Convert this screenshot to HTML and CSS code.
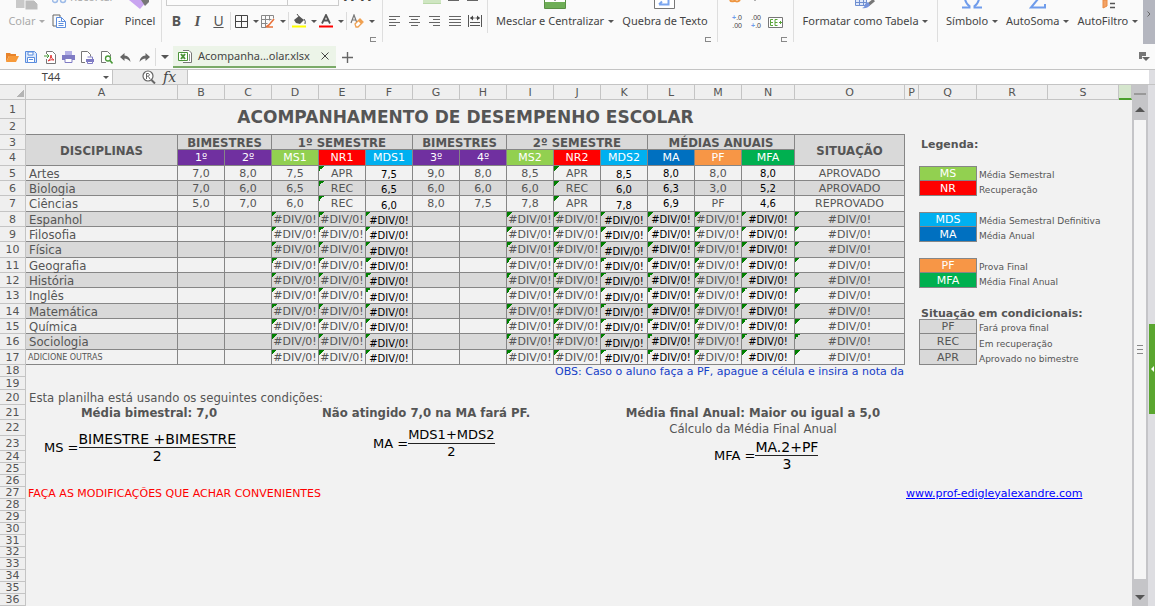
FILE: index.html
```html
<!DOCTYPE html>
<html lang="pt-BR">
<head>
<meta charset="utf-8">
<title>Acompanhamento escolar.xlsx</title>
<link rel="stylesheet" href="styles.css">
</head>
<body>
<div class="app">
  <div class="ribbon">
    <div class="group clipboard">
      <button class="big w-paste disabled"><svg width="24" height="10" viewBox="0 0 24 10"><path d="M1 0h12v8H1z" fill="#c9c9c9"/><path d="M10 0h9l4 4v6H10z" fill="#bdbdbd" stroke="#fafafa"/></svg><span>Colar <i class="caret"></i></span></button>
      <div class="stack">
        <button class="line cut disabled"><svg width="15" height="5" viewBox="0 0 15 5"><circle cx="3" cy="1" r="2.5" fill="none" stroke="#9dbbe8" stroke-width="1.5"/><circle cx="11" cy="1" r="2.5" fill="none" stroke="#9dbbe8" stroke-width="1.5"/></svg><span>Recortar</span></button>
        <button class="line"><svg width="15" height="14" viewBox="0 0 15 14"><path d="M4 12H1V1h7v2" fill="none" stroke="#666"/><path d="M4.500 3.500h5l4 4v6h-9z" fill="#fff" stroke="#5b8dde"/><path d="M9.500 3.500v4h4M6.500 7.500h2M6.500 9.500h5M6.500 11.500h5" fill="none" stroke="#5b8dde"/></svg><span>Copiar</span></button>
      </div>
      <button class="big w-brush"><svg width="22" height="10" viewBox="0 0 22 10"><path d="M0 0l11 9 7-8-1-1z" fill="#c9a5f0"/><path d="M12 0h8v2l-4 4z" fill="#777"/></svg><span>Pincel</span></button>
    </div>
    <div class="group font">
      <div class="top"><select class="face" aria-label="Fonte"><option>Arial</option></select><select class="size" aria-label="Tamanho"><option>10</option></select><b class="grow">A&nbsp;&nbsp;A</b></div>
      <div class="tools">
        <button class="t"><b>B</b></button><button class="t"><em>I</em></button><button class="t"><u>U</u></button>
        <i class="bar"></i>
        <button class="t drop"><svg width="13" height="13" viewBox="0 0 13 13"><path d="M.5.5h12v12H.5zM6.500.5v12M.5 6.500h12" fill="none" stroke="#444"/></svg><i class="caret"></i></button>
        <button class="t drop"><svg width="14" height="13" viewBox="0 0 14 13"><path d="M.5.5h12v3M.5.5v12h5M4.500.5v12M8.500.5v5M.5 4.500h10M.5 8.500h6" fill="none" stroke="#888"/><path d="M13 4L8 10l-3 2M6 12h6" fill="none" stroke="#e8713a" stroke-width="1.600"/></svg><i class="caret"></i></button>
        <i class="bar"></i>
        <button class="t drop"><svg width="14" height="14" viewBox="0 0 14 14"><path d="M2 6l5-4 5 4-4 4-4-1z" fill="#555"/><path d="M5 0l3 4M12 5q2 2 1 5" stroke="#555" fill="none"/><path d="M0 11.500h14v2H0z" fill="#ff0"/></svg><i class="caret"></i></button>
        <button class="t drop"><svg width="14" height="14" viewBox="0 0 14 14"><path d="M3 9.500L7 1l4 8.500M4.500 6.500h5" fill="none" stroke="#555" stroke-width="1.800"/><path d="M0 11.500h14v2H0z" fill="#f00"/></svg><i class="caret"></i></button>
        <i class="bar"></i>
        <button class="t drop"><svg width="14" height="14" viewBox="0 0 14 14"><path d="M1 9l3-8 3 8M2 6h4" fill="none" stroke="#777" stroke-width="1.200"/><path d="M5 10l5-5 3 3-5 5H6z" fill="#fff" stroke="#f0a050" stroke-width="1.300"/><path d="M8 7l3 3 2-2-3-3z" fill="#f0a050"/></svg><i class="caret"></i></button>
      </div>
      <button class="launch" aria-label="Mais opções de fonte"></button>
    </div>
    <div class="group align">
      <div class="aligns">
        <div class="top"><i class="gap"></i><i class="on"></i><svg width="34" height="2" viewBox="0 0 34 2"><path d="M2 .5h11M21 .5h11" stroke="#666"/></svg></div>
        <div class="tools">
          <button class="a" aria-label="Esquerda"><svg width="12" height="12" viewBox="0 0 12 12"><path d="M0 1.500h11M0 4.500h7M0 7.500h11M0 10.500h7" stroke="#666"/></svg></button>
          <button class="a" aria-label="Centro"><svg width="12" height="12" viewBox="0 0 12 12"><path d="M0 1.500h11M2 4.500h7M0 7.500h11M2 10.500h7" stroke="#666"/></svg></button>
          <button class="a" aria-label="Direita"><svg width="12" height="12" viewBox="0 0 12 12"><path d="M0 1.500h11M4 4.500h7M0 7.500h11M4 10.500h7" stroke="#666"/></svg></button>
          <button class="a" aria-label="Justificar"><svg width="12" height="12" viewBox="0 0 12 12"><path d="M0 1.500h12M0 4.500h12M0 7.500h12M0 10.500h12" stroke="#666"/></svg></button>
          <button class="a" aria-label="Distribuir"><svg width="14" height="12" viewBox="0 0 14 12"><path d="M.5 0v12M13.500 0v12M2 7.500h10M2 10.500h10M2.500 3h9" stroke="#555"/><path d="M5 .5L2 3l3 2.500zM9 .5L12 3 9 5.500z" fill="#444"/><path d="M7 0v6" stroke="#fafafa"/></svg></button>
        </div>
      </div>
      <button class="big w-merge"><svg width="22" height="10" viewBox="0 0 22 10"><path d="M.5-2h21V8.500H.5z" fill="#fff" stroke="#5a8f45"/><path d="M1 2h20v6H1z" fill="#6fae57"/><path d="M11 0v1" stroke="#444"/></svg><span>Mesclar e Centralizar <i class="caret"></i></span></button>
      <button class="big w-wrap"><svg width="22" height="10" viewBox="0 0 22 10"><path d="M.5-2h20V8.500H.5z" fill="#fff" stroke="#777"/><path d="M14.500 0v4.500H5M8 1.500L5 4.500" fill="none" stroke="#7aa5ef" stroke-width="2"/></svg><span>Quebra de Texto</span></button>
      <button class="launch" aria-label="Mais opções de alinhamento"></button>
    </div>
    <div class="group number">
      <div class="top"><svg width="30" height="4" viewBox="0 0 30 4"><path d="M2 0q1 2 4 1M6 0q3 3 6 0" fill="none" stroke="#ee9540" stroke-width="2"/><path d="M27 0v1" stroke="#666"/></svg></div>
      <div class="tools">
        <button class="n"><span><b>+</b>.0</span><span>.00</span></button>
        <button class="n"><span>.00</span><span><b>+</b>.0</span></button>
        <button class="n"><svg width="15" height="11" viewBox="0 0 15 11"><path d="M.5.5h14v10H.5z" fill="#fff" stroke="#777"/><path d="M5 2.500H2.500v6H5M2.500 5.500H5M9.500 2.500H7v6h2.500M7 5.500h2.500M11 5.500h3M12.500 4v3" fill="none" stroke="#5aa53a"/></svg></button>
      </div>
      <button class="launch" aria-label="Mais opções de número"></button>
    </div>
    <div class="group styles">
      <button class="big"><svg width="20" height="10" viewBox="0 0 20 10"><path d="M.5-1h11v6.500H.5zM.5 2.500h11M4.500 0v5M8.500 0v5" fill="#dfe8fa" stroke="#6f8fd0"/><path d="M19 0l-6 5" stroke="#777" stroke-width="3"/><path d="M13 2l2 3q-3 4-8 3 3-1 3-4z" fill="#7593dd"/></svg><span>Formatar como Tabela <i class="caret"></i></span></button>
    </div>
    <div class="group edit">
      <button class="big"><svg width="20" height="10" viewBox="0 0 20 10"><path d="M0 7.500h7.500V6Q4 4 3-1M20 7.500h-7.500V6Q16 4 17-1" fill="none" stroke="#6f9ceb" stroke-width="2"/></svg><span>Símbolo <i class="caret"></i></span></button>
      <button class="big"><svg width="18" height="10" viewBox="0 0 18 10"><path d="M9-1L2 7.500h14V4" fill="none" stroke="#6f9ceb" stroke-width="2"/></svg><span>AutoSoma <i class="caret"></i></span></button>
      <button class="big"><svg width="16" height="10" viewBox="0 0 16 10"><path d="M3 0v8l4-2V0z" fill="#f2a265" stroke="#ea8a42"/><path d="M10 3.500h5M10 7.500h5" stroke="#555" stroke-width="1.500"/></svg><span>AutoFiltro <i class="caret"></i></span></button>
    </div>
    <button class="scroll-ribbon" aria-label="Rolar"><svg width="4" height="6" viewBox="0 0 4 6"><path d="M.5.5L3 3 .5 5.500" fill="none" stroke="#666"/></svg></button>
  </div>

  <div class="tabs">
    <button class="q" aria-label="Abrir"><svg width="14" height="12" viewBox="0 0 14 12"><path d="M1 11V2h4l1 1h5v2H4z" fill="#e8832a"/><path d="M1 11l3-6h10l-3 6z" fill="#f79a3a"/></svg></button>
    <button class="q" aria-label="Salvar"><svg width="12" height="12" viewBox="0 0 12 12"><path d="M.5.5h9l2 2v9H.5z" fill="#d9e7fb" stroke="#5b8dde"/><path d="M3 1h5v3H3zM2.500 6.500h7v5h-7zM4 8.500h4" fill="#fff" stroke="#5b8dde"/></svg></button>
    <button class="q" aria-label="Exportar PDF"><svg width="12" height="13" viewBox="0 0 12 13"><path d="M2.500 3V.5h6l3 3v9h-9V8" fill="#fff" stroke="#777"/><path d="M4 10q3-2 3-6 0 4 3 5-3-1-6 1" fill="none" stroke="#e03a3a"/><path d="M0 5h4M3 3l2 2-2 2" fill="none" stroke="#4a9a3a"/></svg></button>
    <button class="q" aria-label="Imprimir"><svg width="13" height="12" viewBox="0 0 13 12"><path d="M3 0h7v4H3z" fill="#b4b1e6"/><path d="M0 4h13v5H0z" fill="#7f7bc4"/><path d="M3 7.500h7v4H3z" fill="#fff" stroke="#7f7bc4"/></svg></button>
    <button class="q" aria-label="Impressão rápida"><svg width="13" height="13" viewBox="0 0 13 13"><path d="M4 11.500H.5V.5h6l3 3v2" fill="#fff" stroke="#777"/><path d="M5 8h8v3H5z" fill="#7f7bc4"/><path d="M6.500 6h5v2M6.500 10.500h5v2h-5z" fill="#fff" stroke="#7f7bc4"/></svg></button>
    <button class="q" aria-label="Visualizar impressão"><svg width="12" height="13" viewBox="0 0 12 13"><path d="M5 11.500H.5V.5h6l3 3v2" fill="#fff" stroke="#777"/><circle cx="7" cy="7.500" r="2.500" fill="#fff" stroke="#4a9a3a" stroke-width="1.300"/><path d="M9 9.500l2.500 3" stroke="#4a9a3a" stroke-width="1.600"/></svg></button>
    <button class="q" aria-label="Desfazer"><svg width="11" height="9" viewBox="0 0 11 9"><path d="M0 4l4.500-4v2.500Q10 3 10.500 9 8 5.500 4.500 5.500V8z" fill="#666"/></svg></button>
    <button class="q" aria-label="Refazer"><svg width="11" height="9" viewBox="0 0 11 9"><path d="M11 4L6.500 0v2.500Q1 3 .5 9 3 5.500 6.500 5.500V8z" fill="#666"/></svg></button>
    <i class="bar"></i>
    <button class="more" aria-label="Personalizar"><i class="caret wide"></i></button>
    <div class="doc">
      <svg width="14" height="13" viewBox="0 0 14 13"><path d="M5 .5h6l2.500 2.500v9.500H5" fill="#fff" stroke="#777"/><path d="M.5 2.500h9v8h-9z" fill="#fff" stroke="#4b9339"/><path d="M3 4l4 5M7 4L3 9" stroke="#4b9339" stroke-width="2"/><path d="M11.500 4v7" stroke="#999"/></svg>
      <a href="#sheet">Acompanha...olar.xlsx</a>
      <button aria-label="Fechar"><svg width="8" height="8" viewBox="0 0 8 8"><path d="M.5.5l7 7M7.500.5l-7 7" stroke="#444"/></svg></button>
    </div>
    <button class="new" aria-label="Nova aba"><svg width="11" height="11" viewBox="0 0 11 11"><path d="M5.500 0v11M0 5.500h11" stroke="#666" stroke-width="1.400"/></svg></button>
    <button class="list" aria-label="Lista de abas"><svg width="11" height="10" viewBox="0 0 11 10"><path d="M0 0h7v4H3v3H0z" fill="#777"/><path d="M3 5h8L7 9z" fill="#666"/></svg></button>
  </div>

  <div class="formula">
    <div class="name"><input value="T44" aria-label="Caixa de nome"><i class="caret"></i></div>
    <div class="fx">
      <svg width="14" height="14" viewBox="0 0 14 14"><circle cx="6" cy="6" r="5" fill="#fff" stroke="#666" stroke-width="1.200"/><path d="M4.500 9V3.500h2q2 1.200 0 2.700h-2M6.500 6.500L8 9" fill="none" stroke="#666"/><path d="M9.500 10l3.500 3.500" stroke="#666" stroke-width="2"/></svg>
      <em>fx</em>
    </div>
    <input class="entry" aria-label="Barra de fórmulas">
    <i class="edge"></i>
  </div>

  <div class="work">
    <div class="view">
    <table class="sheet" id="sheet">
      <colgroup><col class="c-num"><col class="c-a"><col class="c-v" span="12"><col class="c-n"><col class="c-o"><col class="c-p"><col class="c-q"><col class="c-r" span="2"><col></colgroup>
      <thead><tr><th class="corner"></th><th>A</th><th>B</th><th>C</th><th>D</th><th>E</th><th>F</th><th>G</th><th>H</th><th>I</th><th>J</th><th>K</th><th>L</th><th>M</th><th>N</th><th>O</th><th>P</th><th>Q</th><th>R</th><th>S</th><th class="sel"></th></tr></thead>
      <tbody>
      <tr class="h1"><th>1</th><td class="title" colspan="15" rowspan="2">ACOMPANHAMENTO DE DESEMPENHO ESCOLAR</td></tr>
      <tr><th>2</th></tr>
      <tr class="m"><th>3</th><td class="hd" rowspan="2">DISCIPLINAS</td><td class="hd" colspan="2">BIMESTRES</td><td class="hd" colspan="3">1º SEMESTRE</td><td class="hd" colspan="2">BIMESTRES</td><td class="hd" colspan="3">2º SEMESTRE</td><td class="hd" colspan="3">MÉDIAS ANUAIS</td><td class="hd" rowspan="2">SITUAÇÃO</td><td></td><td class="leg" colspan="3">Legenda:</td></tr>
      <tr class="m tall"><th>4</th><td class="k purple">1º</td><td class="k purple">2º</td><td class="k lime">MS1</td><td class="k red">NR1</td><td class="k cyan">MDS1</td><td class="k purple">3º</td><td class="k purple">4º</td><td class="k lime">MS2</td><td class="k red">NR2</td><td class="k cyan">MDS2</td><td class="k blue">MA</td><td class="k orange">PF</td><td class="k green">MFA</td></tr>
      <tr class="m d"><th>5</th><td>Artes</td><td>7,0</td><td>8,0</td><td>7,5</td><td>APR</td><td>7,5</td><td>9,0</td><td>8,0</td><td>8,5</td><td>APR</td><td>8,5</td><td>8,0</td><td>8,0</td><td>8,0</td><td>APROVADO</td><td></td><td class="k lime first">MS</td><td class="desc" colspan="3">Média Semestral</td></tr>
      <tr class="m d alt"><th>6</th><td>Biologia</td><td>7,0</td><td>6,0</td><td>6,5</td><td>REC</td><td>6,5</td><td>6,0</td><td>6,0</td><td>6,0</td><td>REC</td><td>6,0</td><td>6,3</td><td>3,0</td><td>5,2</td><td>APROVADO</td><td></td><td class="k red">NR</td><td class="desc" colspan="3">Recuperação</td></tr>
      <tr class="m d tall"><th>7</th><td>Ciências</td><td>5,0</td><td>7,0</td><td>6,0</td><td>REC</td><td>6,0</td><td>8,0</td><td>7,5</td><td>7,8</td><td>APR</td><td>7,8</td><td>6,9</td><td>PF</td><td>4,6</td><td>REPROVADO</td></tr>
      <tr class="m d err alt"><th>8</th><td>Espanhol</td><td></td><td></td><td>#DIV/0!</td><td>#DIV/0!</td><td>#DIV/0!</td><td></td><td></td><td>#DIV/0!</td><td>#DIV/0!</td><td>#DIV/0!</td><td>#DIV/0!</td><td>#DIV/0!</td><td>#DIV/0!</td><td>#DIV/0!</td><td></td><td class="k cyan first">MDS</td><td class="desc" colspan="3">Média Semestral Definitiva</td></tr>
      <tr class="m d err"><th>9</th><td>Filosofia</td><td></td><td></td><td>#DIV/0!</td><td>#DIV/0!</td><td>#DIV/0!</td><td></td><td></td><td>#DIV/0!</td><td>#DIV/0!</td><td>#DIV/0!</td><td>#DIV/0!</td><td>#DIV/0!</td><td>#DIV/0!</td><td>#DIV/0!</td><td></td><td class="k blue">MA</td><td class="desc" colspan="3">Média Anual</td></tr>
      <tr class="m d err alt tall"><th>10</th><td>Física</td><td></td><td></td><td>#DIV/0!</td><td>#DIV/0!</td><td>#DIV/0!</td><td></td><td></td><td>#DIV/0!</td><td>#DIV/0!</td><td>#DIV/0!</td><td>#DIV/0!</td><td>#DIV/0!</td><td>#DIV/0!</td><td>#DIV/0!</td></tr>
      <tr class="m d err"><th>11</th><td>Geografia</td><td></td><td></td><td>#DIV/0!</td><td>#DIV/0!</td><td>#DIV/0!</td><td></td><td></td><td>#DIV/0!</td><td>#DIV/0!</td><td>#DIV/0!</td><td>#DIV/0!</td><td>#DIV/0!</td><td>#DIV/0!</td><td>#DIV/0!</td><td></td><td class="k orange first">PF</td><td class="desc" colspan="3">Prova Final</td></tr>
      <tr class="m d err alt"><th>12</th><td>História</td><td></td><td></td><td>#DIV/0!</td><td>#DIV/0!</td><td>#DIV/0!</td><td></td><td></td><td>#DIV/0!</td><td>#DIV/0!</td><td>#DIV/0!</td><td>#DIV/0!</td><td>#DIV/0!</td><td>#DIV/0!</td><td>#DIV/0!</td><td></td><td class="k green">MFA</td><td class="desc" colspan="3">Média Final Anual</td></tr>
      <tr class="m d err tall"><th>13</th><td>Inglês</td><td></td><td></td><td>#DIV/0!</td><td>#DIV/0!</td><td>#DIV/0!</td><td></td><td></td><td>#DIV/0!</td><td>#DIV/0!</td><td>#DIV/0!</td><td>#DIV/0!</td><td>#DIV/0!</td><td>#DIV/0!</td><td>#DIV/0!</td></tr>
      <tr class="m d err alt"><th>14</th><td>Matemática</td><td></td><td></td><td>#DIV/0!</td><td>#DIV/0!</td><td>#DIV/0!</td><td></td><td></td><td>#DIV/0!</td><td>#DIV/0!</td><td>#DIV/0!</td><td>#DIV/0!</td><td>#DIV/0!</td><td>#DIV/0!</td><td>#DIV/0!</td><td></td><td class="leg" colspan="4">Situação em condicionais:</td></tr>
      <tr class="m d err"><th>15</th><td>Química</td><td></td><td></td><td>#DIV/0!</td><td>#DIV/0!</td><td>#DIV/0!</td><td></td><td></td><td>#DIV/0!</td><td>#DIV/0!</td><td>#DIV/0!</td><td>#DIV/0!</td><td>#DIV/0!</td><td>#DIV/0!</td><td>#DIV/0!</td><td></td><td class="k gray first">PF</td><td class="desc" colspan="3">Fará prova final</td></tr>
      <tr class="m d err alt tall"><th>16</th><td>Sociologia</td><td></td><td></td><td>#DIV/0!</td><td>#DIV/0!</td><td>#DIV/0!</td><td></td><td></td><td>#DIV/0!</td><td>#DIV/0!</td><td>#DIV/0!</td><td>#DIV/0!</td><td>#DIV/0!</td><td>#DIV/0!</td><td>#DIV/0!</td><td></td><td class="k gray">REC</td><td class="desc" colspan="3">Em recuperação</td></tr>
      <tr class="m d err last"><th>17</th><td>ADICIONE OUTRAS</td><td></td><td></td><td>#DIV/0!</td><td>#DIV/0!</td><td>#DIV/0!</td><td></td><td></td><td>#DIV/0!</td><td>#DIV/0!</td><td>#DIV/0!</td><td>#DIV/0!</td><td>#DIV/0!</td><td>#DIV/0!</td><td>#DIV/0!</td><td></td><td class="k gray">APR</td><td class="desc" colspan="3">Aprovado no bimestre</td></tr>
      <tr class="s"><th>18</th><td colspan="9"></td><td class="obs" colspan="6">OBS: Caso o aluno faça a PF, apague a célula e insira a nota da PF</td></tr>
      <tr class="s nineteen"><th>19</th></tr>
      <tr class="m"><th>20</th><td class="note" colspan="8">Esta planilha está usando os seguintes condições:</td></tr>
      <tr class="m"><th>21</th><td class="note strong mid" colspan="3">Média bimestral: 7,0</td><td></td><td class="note strong" colspan="6">Não atingido 7,0 na MA fará PF.</td><td class="note strong mid" colspan="5">Média final Anual: Maior ou igual a 5,0</td></tr>
      <tr class="m tall"><th>22</th><td colspan="4" rowspan="4"><div class="eq eq-ms"><span>MS =</span><span class="frac"><span>BIMESTRE +BIMESTRE</span><span>2</span></span></div></td><td colspan="6" rowspan="3"><div class="eq eq-ma"><span>MA =</span><span class="frac"><span>MDS1+MDS2</span><span>2</span></span></div></td><td class="note mid" colspan="5">Cálculo da Média Final Anual</td></tr>
      <tr class="m"><th>23</th><td colspan="5" rowspan="3"><div class="eq eq-mfa"><span>MFA =</span><span class="frac"><span>MA.2+PF</span><span>3</span></span></div></td></tr>
      <tr class="s"><th>24</th></tr>
      <tr class="s"><th>25</th></tr>
      <tr class="s"><th>26</th></tr>
      <tr class="s"><th>27</th><td class="warn" colspan="10">FAÇA AS MODIFICAÇÕES QUE ACHAR CONVENIENTES</td><td colspan="5"></td><td class="site" colspan="5"><a href="#sheet">www.prof-edigleyalexandre.com</a></td></tr>
      <tr class="s"><th>28</th></tr>
      <tr class="s"><th>29</th></tr>
      <tr class="s"><th>30</th></tr>
      <tr class="s"><th>31</th></tr>
      <tr class="s short"><th>32</th></tr>
      <tr class="s"><th>33</th></tr>
      <tr class="s"><th>34</th></tr>
      <tr class="s"><th>35</th></tr>
      <tr class="s"><th>36</th></tr>
      <tr class="s"><th>37</th></tr>
      </tbody>
    </table>
    </div>
    <div class="vbar">
      <button class="split" aria-label="Dividir"></button>
      <button class="up" aria-label="Acima"><i></i></button>
      <div class="thumb"><i></i><i></i><i></i></div>
      <button class="down" aria-label="Abaixo"><i></i></button>
    </div>
    <div class="side"><i class="above"></i><button aria-label="Painel lateral"><i></i></button><i class="below"></i></div>
  </div>
</div>
</body>
</html>
```
FILE: styles.css
```css
* { box-sizing: border-box; }
body { margin: 0; background: #fafafa; color: #444; font: 11px/14px "Noto Sans", "Open Sans", sans-serif; }
button { margin: 0; padding: 0; border: 0; background: none; color: inherit; font: inherit; display: flex; align-items: center; justify-content: center; }
input, select { margin: 0; border: 0; padding: 0; font: inherit; color: inherit; border-radius: 0; min-width: 0; }
svg { display: block; flex: none; }
.app { height: 100vh; display: flex; flex-direction: column; overflow: hidden; }
.caret { display: inline-block; border: 3px solid transparent; border-top-color: #555; border-bottom: 0; vertical-align: 2px; margin-left: 1px; }
.caret.wide { border-width: 4px 4px 0; }
.bar { width: 1px; height: 18px; background: #dcdcdc; }

/* ribbon */
.ribbon { display: flex; height: 45px; overflow: hidden; flex: none; }
.group { display: flex; position: relative; height: 42px; border-right: 1px solid #dedede; flex: none; }
.big { flex-direction: column; justify-content: flex-start; gap: 4px; height: 34px; white-space: nowrap; }
.disabled { color: #aaa; }
.disabled .caret { border-top-color: #aaa; }
.clipboard { width: 162px; padding-left: 8px; }
.w-paste { width: 38px; }
.w-brush { width: 42px; margin-left: 5px; }
.stack { display: flex; flex-direction: column; gap: 10px; padding-left: 6px; }
.line { gap: 3px; height: 14px; justify-content: flex-start; }
.line.cut { height: 4px; align-items: flex-end; }
.font, .number { flex-direction: column; }
.font { width: 221px; padding-left: 4px; }
.top { display: flex; height: 14px; align-items: flex-start; }
.font .top { height: 6px; align-items: flex-end; margin-bottom: 6px; }
.face, .size { height: 20px; border: 1px solid #ccc; background: #fcfcfc; color: #aaa; appearance: none; padding-left: 6px; }
.face { width: 122px; }
.size { width: 51px; border-left: 0; }
.grow { line-height: 12px; padding: 0 0 4px 5px; font-size: 14px; }
.tools { display: flex; align-items: center; height: 18px; }
.font .bar { margin: 0 2px 0 1px; }
.t { width: 21px; height: 18px; font-size: 14px; color: #555; }
.t em { font-family: "Liberation Serif", serif; font-weight: bold; font-size: 15px; }
.t.drop { width: 27px; gap: 4px; }
.launch { position: absolute; right: 6px; bottom: 0; width: 6px; height: 5px; border: 1px solid #888; border-right: 0; }
.aligns { width: 105px; height: 33px; padding-left: 2px; border-right: 1px solid #dedede; }
.aligns .top { height: 12px; }
.gap { width: 38px; }
.on { width: 18px; height: 4px; background: #cfe6c2; border-bottom: 1px solid #b9d8a8; margin-right: 5px; }
.align { width: 335px; }
.a { width: 20px; height: 18px; }
.w-merge { width: 134px; }
.w-wrap { width: 86px; }
.number { width: 76px; padding-left: 5px; }
.number .top { height: 12px; padding-left: 5px; }
.number .tools { height: 20px; }
.n { width: 19px; flex-direction: column; align-items: flex-end; font: 7px/8px "Liberation Sans", sans-serif; }
.n b { color: #6f9ceb; }
.n svg { align-self: flex-start; margin-left: 7px; }
.styles { width: 144px; justify-content: center; }
.edit { flex: 1 0 auto; padding-left: 8px; gap: 8px; border: 0; }
.scroll-ribbon { width: 12px; height: 44px; background: #b4b6bf; padding-bottom: 16px; }

/* document tabs */
.tabs { display: flex; align-items: center; height: 24px; padding-left: 2px; flex: none; }
.q { width: 19px; height: 20px; }
.tabs .bar { margin-left: 1px; }
.more { width: 17px; height: 20px; padding-right: 1px; }
.doc { display: flex; align-items: center; height: 22px; width: 163px; padding-left: 5px; background: #ecf4e8; border-bottom: 2px solid #7aaa68; }
.doc a { color: inherit; text-decoration: none; padding-left: 6px; flex: 1; white-space: nowrap; }
.doc button { width: 22px; height: 18px; }
.new { width: 22px; height: 20px; }
.list { margin-left: auto; padding-right: 5px; }

/* name box and formula bar */
.formula { display: flex; height: 16px; background: #ececec; border-top: 1px solid #c4c4c4; border-bottom: 1px solid #c4c4c4; flex: none; }
.name { display: flex; align-items: center; width: 113px; background: #fff; border-right: 1px solid #c4c4c4; }
.name input { flex: 1; height: 14px; text-align: center; background: none; }
.name .caret { margin-right: 3px; }
.fx { display: flex; align-items: center; gap: 7px; width: 74px; padding-left: 29px; }
.fx em { font: italic 14px/14px "DejaVu Serif", serif; color: #444; }
.entry { flex: 1; background: #fff; border-left: 1px solid #c4c4c4; }
.edge { width: 6px; background: #dedee2; }

/* sheet */
.work { display: flex; flex: 1; min-height: 0; background: #f2f2f2; }
.view { flex: 1; min-width: 0; overflow: hidden; }
.sheet { width: 100%; table-layout: fixed; border-collapse: separate; border-spacing: 0; font: 11px/11px "DejaVu Sans", sans-serif; color: #555; }
.c-num { width: 26px; } .c-a { width: 152px; } .c-v { width: 47px; } .c-n { width: 53px; } .c-o { width: 110px; }
.c-p { width: 14px; } .c-q { width: 58px; } .c-r { width: 71px; }
.sheet th, .sheet td { padding: 0; white-space: nowrap; vertical-align: middle; }
.sheet th { font-weight: normal; background: #efefef; border: 0 solid #c4c4c4; border-width: 0 1px 1px 0; }
.sheet .corner { background: linear-gradient(135deg, transparent 50%, #b4b4b4 50%) 17px 5px / 7px 7px no-repeat #efefef; }
.sheet .sel { background: #d5e6cd; border-bottom: 2px solid #4aa02c; }
.sheet tr { height: 16px; }
.sheet thead tr { height: 15px; }
.sheet .h1 { height: 19px; }
.sheet .m { height: 15px; }
.sheet .m.tall { height: 16px; }
.sheet .s { height: 12px; }
.sheet .s.nineteen { height: 13px; }
.sheet .s.short { height: 11px; }
.sheet .s.short th { line-height: 10px; }
.sheet .title { font: bold 17px/20px "DejaVu Sans", sans-serif; text-align: center; border-bottom: 1px solid #868686; }
.sheet .hd { font: bold 13px/13px "DejaVu Sans Condensed", "DejaVu Sans", sans-serif; text-align: center; background: #d9d9d9; border: 0 solid #868686; border-width: 0 1px 1px 0; }
.d td { text-align: center; }
.d td:nth-child(-n+16) { border: 0 solid #868686; border-width: 0 1px 1px 0; }
.d.alt td:nth-child(-n+16) { background-color: #d9d9d9; }
.sheet .d td:nth-child(2) { font: 13px/13px "DejaVu Sans Condensed", "DejaVu Sans", sans-serif; text-align: left; padding-left: 3px; }
.sheet .d.last td:nth-child(2) { font: 8px/13px "DejaVu Sans", sans-serif; padding-left: 2px; }
.d td:nth-child(7), .d td:nth-child(12), .d td:nth-child(13), .d td:nth-child(15) { font-size: 10px; color: #000; }
.sheet .d td:nth-child(7), .sheet .d td:nth-child(12) { vertical-align: bottom; }
.d td:nth-child(6), .d td:nth-child(11),
.err td:nth-child(5), .err td:nth-child(7), .err td:nth-child(10), .err td:nth-child(n+12):nth-child(-n+16) { background-image: linear-gradient(135deg, #008000 50%, transparent 50%); background-size: 5px 5px; background-repeat: no-repeat; }
.sheet .k { text-align: center; color: #fff; border: 0 solid #868686; border-width: 0 1px 1px 0; }
.sheet .d .k { border-left-width: 1px; }
.sheet .d .first { border-top-width: 1px; }
.purple { background: #7030a0; } .lime { background: #92d050; } .red { background: #f00; } .cyan { background: #00b0f0; }
.blue { background: #0070c0; } .orange { background: #f79646; } .green { background: #00b050; }
.sheet .gray { background: #d9d9d9; color: #555; }
.sheet .desc { font-size: 9px; text-align: left; vertical-align: bottom; padding-left: 2px; }
.sheet .leg { font-weight: bold; text-align: left; vertical-align: bottom; padding-left: 2px; }
.sheet .obs { color: #1540c8; overflow: hidden; padding-left: 1px; }
.sheet .note { font: 13px/13px "DejaVu Sans Condensed", "DejaVu Sans", sans-serif; padding-left: 3px; }
.sheet .strong { font-weight: bold; }
.sheet .mid { text-align: center; padding-left: 0; }
.sheet .warn { color: #f00; padding-left: 2px; }
.sheet .site { padding-left: 1px; }
.site a { color: #00f; }
.eq { display: flex; align-items: center; color: #000; font-size: 13px; line-height: 16px; }
.frac { display: flex; flex-direction: column; text-align: center; }
.frac span:first-child { border-bottom: 1px solid #222; }
.eq-ms { padding-left: 18px; }
.eq-ms .frac, .eq-mfa .frac { font-size: 14px; }
.eq-ma { padding-left: 54px; padding-top: 4px; }
.eq-mfa { padding-left: 113px; }

/* scrollbar and side panel */
.vbar { display: flex; flex-direction: column; width: 16px; padding: 0 2px; background: #c5c5c8; flex: none; }
.split { height: 14px; }
.split::before { content: ""; width: 12px; height: 2px; background: #999; margin-top: 4px; }
.up { height: 21px; }
.up i { border: 5px solid transparent; border-top: 0; border-bottom-color: #555; }
.thumb { flex: 1; display: flex; flex-direction: column; align-items: center; justify-content: center; gap: 3px; background: #f5f5f5; }
.thumb i { width: 6px; height: 1px; background: #888; }
.down { height: 27px; padding-top: 10px; }
.down i { border: 5px solid transparent; border-bottom: 0; border-top-color: #555; }
.side { display: flex; flex-direction: column; width: 7px; background: #dedee2; padding-left: 1px; flex: none; }
.above { flex: 5; } .below { flex: 4; }
.side button { height: 90px; background: #5aa62f; }
.side button i { border: 3px solid transparent; border-left: 0; border-right-color: #fff; }
```
